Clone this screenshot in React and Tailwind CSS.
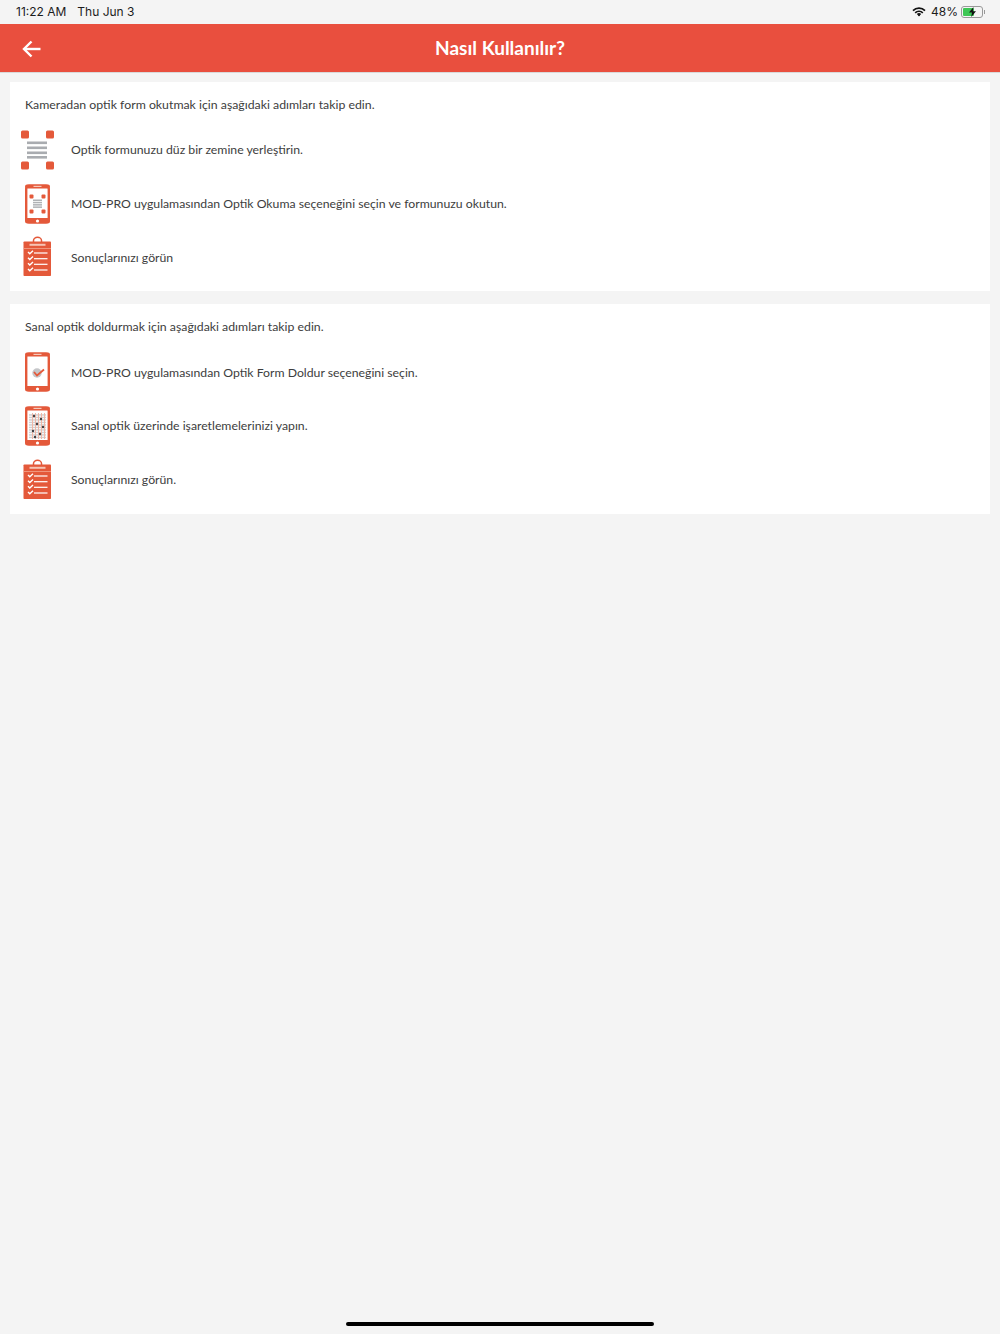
import React from "react";

const RED = "#e4593a";

function ScanIcon() {
  return (
    <svg width="36" height="42" viewBox="0 0 36 42">
      {[[2, 1.5], [27, 1.5], [2, 32.5], [27, 32.5]].map(([x, y]) => (
        <rect key={`${x}-${y}`} x={x} y={y} width="8" height="8" rx="1.5" fill={RED} />
      ))}
      {[12.5, 17.5, 22.5, 27].map((y) => (
        <rect key={y} x="8" y={y} width="20" height="2.6" fill="#a9acb0" />
      ))}
    </svg>
  );
}

function Phone({ children }) {
  return (
    <svg width="36" height="42" viewBox="0 0 36 42">
      <rect x="7.2" y="2.7" width="22.6" height="36.6" rx="3" fill="#fff" stroke={RED} strokeWidth="2.4" />
      <rect x="6" y="1.5" width="25" height="4" rx="2" fill={RED} />
      <rect x="6" y="35" width="25" height="5.5" rx="2.5" fill={RED} />
      <rect x="14.5" y="2.8" width="8" height="1.2" fill="#f6c9bb" />
      <circle cx="18.5" cy="38" r="1.6" fill="#fff" />
      {children}
    </svg>
  );
}

function PhoneScan() {
  return (
    <Phone>
      {[[10.5, 11.5], [22.5, 11.5], [10.5, 26.5], [22.5, 26.5]].map(([x, y]) => (
        <rect key={`${x}-${y}`} x={x} y={y} width="4" height="4" rx="1" fill={RED} />
      ))}
      {[16.5, 18.8, 21.1, 23.4].map((y) => (
        <rect key={y} x="14" y={y} width="9" height="1.5" fill="#b0b2b5" />
      ))}
    </Phone>
  );
}

function PhoneCheck() {
  return (
    <Phone>
      <circle cx="18" cy="22" r="4.7" fill="#c5c6c9" />
      <path d="M15 21 L18 24.5 L25 18.5" fill="none" stroke={RED} strokeWidth="1.8" />
    </Phone>
  );
}

function PhoneGrid() {
  const dots = [[15, 11], [22, 14], [18, 19], [24, 22], [14, 26], [21, 29], [16, 32]];
  return (
    <Phone>
      {[10, 12.5, 15, 17.5, 20, 22.5, 25, 27.5, 30, 32.5].map((y) => (
        <rect key={y} x="10" y={y - 0.8} width="17" height="1.5" fill="#d0d0d2" />
      ))}
      {[13, 16, 19, 22, 25].map((x) => (
        <rect key={x} x={x} y="8" width="1" height="26" fill="#f0b7a6" />
      ))}
      {dots.map(([x, y]) => (
        <circle key={`${x}-${y}`} cx={x} cy={y} r="1.2" fill="#3f3f42" />
      ))}
    </Phone>
  );
}

function ClipboardIcon() {
  return (
    <svg width="36" height="42" viewBox="0 0 36 42">
      <path d="M14.5 6 V4.5 a4 3.2 0 0 1 8 0 V6" fill="none" stroke={RED} strokeWidth="1.5" />
      <rect x="4.5" y="5.5" width="27.5" height="34.5" rx="0.8" fill={RED} />
      <rect x="10.5" y="7.8" width="16" height="2" fill="#f6c4b4" />
      <rect x="4.5" y="12" width="27.5" height="0.8" fill="#f3a48e" />
      {[17, 22.7, 28.3, 34].map((y) => (
        <g key={y}>
          <path d={`M9 ${y - 1} L10.8 ${y + 0.8} L14 ${y - 2.2}`} fill="none" stroke="#fff" strokeWidth="1.4" />
          <rect x="15" y={y - 0.6} width="13.5" height="1.2" fill="#fff" />
        </g>
      ))}
    </svg>
  );
}

function Row({ icon, text }) {
  return (
    <div className="flex h-[53.8px] items-center">
      <div className="w-[36px] shrink-0">{icon}</div>
      <p className="ml-[16px] pt-[1px] text-[12.25px] text-[#3d3d3d]">{text}</p>
    </div>
  );
}

function Card({ title, rows }) {
  return (
    <section className="bg-white pl-[9px] pt-[13px] pb-[7px]">
      <p className="ml-[6px] h-[28px] text-[12.3px] leading-[19px] text-[#3d3d3d]">{title}</p>
      {rows.map((r) => (
        <Row key={r.text} icon={r.icon} text={r.text} />
      ))}
    </section>
  );
}

export default function App() {
  return (
    <div className="flex h-[1334px] flex-col overflow-hidden bg-[#f4f4f4] font-['Lato','Open_Sans',sans-serif]">
      {/* Status bar */}
      <div className="flex h-[24px] items-center justify-between pl-[16px] pr-[15px] font-['Inter',sans-serif] text-[12px] text-[#1c1c1c]">
        <div className="flex gap-[11px]">
          <span>11:22 AM</span>
          <span>Thu Jun 3</span>
        </div>
        <div className="flex items-center">
          <svg width="14" height="10" viewBox="0 0 14 10" fill="none" stroke="#111" strokeWidth="1.7">
            <path d="M1 3.6 a8.5 8.5 0 0 1 12 0" />
            <path d="M3.2 5.8 a5.4 5.4 0 0 1 7.6 0" />
            <circle cx="7" cy="8.3" r="1" fill="#111" stroke="none" />
            <path d="M5.4 7.6 a2.3 2.3 0 0 1 3.2 0" />
          </svg>
          <span className="ml-[5px]">48%</span>
          <div className="ml-[3px] flex items-center">
            <div className="relative flex h-[12px] w-[22px] items-center rounded-[3px] border border-[#999] p-[1px]">
              <div className="h-full w-[11px] rounded-[1px] bg-[#3ec755]" />
              <svg className="absolute left-[6px] top-[0px]" width="9" height="10" viewBox="0 0 9 10" fill="#111">
                <path d="M5.5 0 L1 5.6 H4 L3.2 10 L8 4.2 H4.8 Z" />
              </svg>
            </div>
            <div className="ml-[1px] h-[4px] w-[1px] bg-[#999]" />
          </div>
        </div>
      </div>

      {/* Header */}
      <header className="relative flex h-[49px] items-center justify-center border-b border-[#d9d9d9] bg-[#e94f3e]">
        <svg className="absolute left-[22px] mt-[1px]" width="19" height="18" viewBox="0 0 19 18" fill="none" stroke="#fff" strokeWidth="2.4">
          <path d="M9.5 1.5 L2 9 L9.5 16.5" />
          <path d="M2.5 9 H18.5" />
        </svg>
        <h1 className="text-[19px] font-bold text-white">Nasıl Kullanılır?</h1>
      </header>

      <main className="mt-[9px] flex flex-col gap-[13px] px-[10px]">
        <Card
          title="Kameradan optik form okutmak için aşağıdaki adımları takip edin."
          rows={[
            { icon: <ScanIcon />, text: "Optik formunuzu düz bir zemine yerleştirin." },
            { icon: <PhoneScan />, text: "MOD-PRO uygulamasından Optik Okuma seçeneğini seçin ve formunuzu okutun." },
            { icon: <ClipboardIcon />, text: "Sonuçlarınızı görün" },
          ]}
        />
        <Card
          title="Sanal optik doldurmak için aşağıdaki adımları takip edin."
          rows={[
            { icon: <PhoneCheck />, text: "MOD-PRO uygulamasından Optik Form Doldur seçeneğini seçin." },
            { icon: <PhoneGrid />, text: "Sanal optik üzerinde işaretlemelerinizi yapın." },
            { icon: <ClipboardIcon />, text: "Sonuçlarınızı görün." },
          ]}
        />
      </main>

      {/* Home indicator */}
      <div className="mt-auto mb-[8px] h-[4px] w-[308px] self-center rounded-full bg-black" />
    </div>
  );
}
